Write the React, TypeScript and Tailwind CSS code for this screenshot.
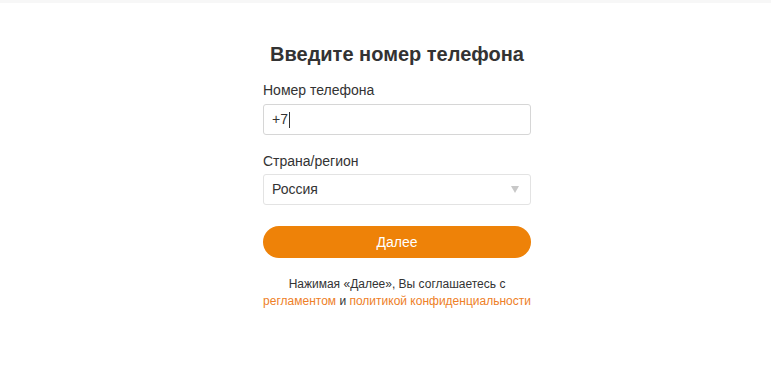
import React from "react";

export default function App() {
  return (
    <div className="w-[771px] h-[365px] bg-white overflow-hidden" style={{ fontFamily: '"Liberation Sans", Arial, sans-serif' }}>
      <div className="h-[3px] bg-[#f7f7f7]" />
      <div className="flex justify-center pl-[23px]">
        <div className="w-[268px] flex flex-col">
          <h1 className="mt-[38px] text-center text-[20px] leading-[26px] font-bold text-[#333]">Введите номер телефона</h1>
          <label className="mt-[15px] text-[14px] leading-[16px] text-[#333]">Номер телефона</label>
          <div className="mt-[6px] h-[31px] border border-[#d6d6d6] rounded-[3px] flex items-center px-[8px] text-[14px] text-[#333]">
            <span>+7</span>
            <span className="w-px h-[16px] bg-[#333] ml-[1px]" />
          </div>
          <label className="mt-[18px] text-[14px] leading-[16px] text-[#333]">Страна/регион</label>
          <div className="mt-[5px] h-[31px] border border-[#e3e3e3] rounded-[3px] flex items-center justify-between pl-[8px] pr-[11px] text-[14px] text-[#333]">
            <span>Россия</span>
            <svg width="8" height="7" viewBox="0 0 8 7"><polygon points="0,0 8,0 4,7" fill="#c8c8c8" /></svg>
          </div>
          <button className="mt-[21px] h-[32px] rounded-full bg-[#ee8208] text-white text-[14px]">Далее</button>
          <p className="mt-[18px] text-center text-[12px] leading-[17px] text-[#333]">
            Нажимая «Далее», Вы соглашаетесь с
            <br />
            <span className="text-[#ee8027]">регламентом</span> и <span className="text-[#ee8027]">политикой конфиденциальности</span>
          </p>
        </div>
      </div>
    </div>
  );
}
